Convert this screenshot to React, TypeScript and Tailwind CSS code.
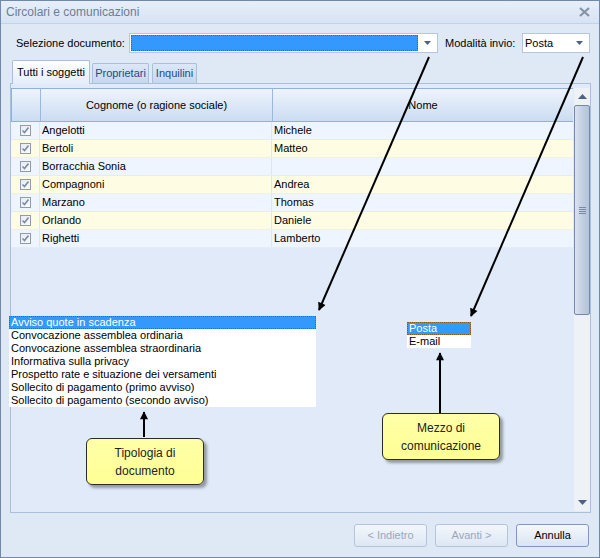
const font = { fontFamily: '"Liberation Sans", Arial, sans-serif' };

type Person = { cognome: string; nome: string };

const people: Person[] = [
  { cognome: 'Angelotti', nome: 'Michele' },
  { cognome: 'Bertoli', nome: 'Matteo' },
  { cognome: 'Borracchia Sonia', nome: '' },
  { cognome: 'Compagnoni', nome: 'Andrea' },
  { cognome: 'Marzano', nome: 'Thomas' },
  { cognome: 'Orlando', nome: 'Daniele' },
  { cognome: 'Righetti', nome: 'Lamberto' }
];

const documenti = [
  'Avviso quote in scadenza',
  'Convocazione assemblea ordinaria',
  'Convocazione assemblea straordinaria',
  'Informativa sulla privacy',
  'Prospetto rate e situazione dei versamenti',
  'Sollecito di pagamento (primo avviso)',
  'Sollecito di pagamento (secondo avviso)'
];

function ComboArrow() {
  return (
    <svg width="7" height="4" viewBox="0 0 7 4" className="shrink-0">
      <path d="M0 0h7L3.5 4z" fill="#4d6185" />
    </svg>
  );
}

function CheckBox() {
  return (
    <div className="flex h-[11px] w-[11px] items-center justify-center border border-[#8e9cb3] bg-gradient-to-br from-[#e6ebf3] to-[#fbfcfe]">
      <svg width="9" height="9" viewBox="0 0 9 9">
        <path d="M1.5 4.5l2 2 4-5" fill="none" stroke="#7d8aa3" strokeWidth="1.6" />
      </svg>
    </div>
  );
}

function WinButton({ label, disabled }: { label: string; disabled?: boolean }) {
  return (
    <button
      className={
        disabled
          ? 'h-[23px] w-[73px] rounded-[3px] border border-[#b3c4dc] bg-gradient-to-b from-[#f3f7fc] to-[#dde7f4] text-[11px] text-[#9ba7b9]'
          : 'h-[23px] w-[73px] rounded-[3px] border border-[#7f98bb] bg-gradient-to-b from-[#f5f8fc] to-[#d9e4f3] text-[11px] text-black'
      }
    >
      {label}
    </button>
  );
}

function Callout({ lines, className }: { lines: string[]; className: string }) {
  return (
    <div
      className={
        'absolute flex h-[47px] w-[118px] flex-col items-center justify-center rounded-[6px] border border-[#2b2b2b] bg-gradient-to-b from-[#ffffa8] to-[#ffff94] text-[12px] leading-[18px] text-[#222] shadow-[3px_3px_3px_rgba(0,0,0,0.35)] ' +
        className
      }
    >
      {lines.map((l) => (
        <span key={l}>{l}</span>
      ))}
    </div>
  );
}

export default function App() {
  return (
    <div className="relative h-[558px] w-[600px] overflow-hidden bg-white" style={font}>
      <div className="flex h-[558px] w-[600px] flex-col border border-[#7088a9] bg-[#dfe9f6]">
        {/* title bar */}
        <div className="flex h-[23px] shrink-0 items-center justify-between border-b border-[#c2d2e7] bg-gradient-to-b from-[#e7eff9] to-[#d6e3f3] pl-[5px] pr-[9px]">
          <span className="text-[12px] text-[#6c7d96]">Circolari e comunicazioni</span>
          <svg width="11" height="10" viewBox="0 0 11 10">
            <path d="M1 1l9 8M10 1L1 9" stroke="#8592a8" strokeWidth="2.2" />
          </svg>
        </div>

        {/* toolbar */}
        <div className="mt-[9px] flex h-[20px] items-center pl-[15px] text-[11px] text-black">
          <span className="w-[113px]">Selezione documento:</span>
          <div className="flex h-[20px] w-[309px] items-center border border-[#b5c7df] bg-white pl-[1px] pr-[6px]">
            <div className="h-[16px] flex-1 border border-dotted border-[#8a5a1a] bg-[#3399ff]" />
            <div className="ml-[6px]">
              <ComboArrow />
            </div>
          </div>
          <span className="ml-[7px] w-[77px]">Modalità invio:</span>
          <div className="flex h-[20px] w-[68px] items-center justify-between border border-[#b5c7df] bg-white pl-[2px] pr-[6px]">
            <span>Posta</span>
            <ComboArrow />
          </div>
        </div>

        {/* tabs */}
        <div className="mt-[7px] flex h-[23px] items-end gap-[2px] pl-[11px] text-[11px]">
          <div className="relative z-10 -mb-px flex h-[24px] w-[78px] items-center justify-center rounded-t-[2px] border border-b-0 border-[#a9bfdc] bg-gradient-to-b from-[#ffffff] to-[#e4edf9] text-black">
            Tutti i soggetti
          </div>
          <div className="flex h-[20px] w-[57px] items-center justify-center rounded-t-[2px] border border-b-0 border-[#a9bfdc] bg-gradient-to-b from-[#dce8f7] to-[#c5d7ef] text-[#1d4a8c]">
            Proprietari
          </div>
          <div className="ml-px flex h-[20px] w-[45px] items-center justify-center rounded-t-[2px] border border-b-0 border-[#a9bfdc] bg-gradient-to-b from-[#dce8f7] to-[#c5d7ef] text-[#1d4a8c]">
            Inquilini
          </div>
        </div>

        {/* tab panel */}
        <div className="ml-[9px] h-[430px] w-[581px] border border-[#a9bfdc] bg-[#e0eaf8] pt-[4px]">
          <div className="flex h-[423px]">
            <div className="flex w-[562px] flex-col text-[11px] text-black">
              <div className="flex h-[34px] border-y border-l border-[#8fb1de] bg-gradient-to-b from-[#eef4fc] to-[#cbdcf2]">
                <div className="w-[29px] border-r border-[#9ab9e2]" />
                <div className="flex w-[232px] items-center justify-center border-r border-[#9ab9e2]">
                  Cognome (o ragione sociale)
                </div>
                <div className="flex flex-1 items-center justify-center">Nome</div>
              </div>
              {people.map((p, i) => (
                <div
                  key={p.cognome}
                  className={
                    i % 2 === 1
                      ? 'flex h-[18px] border-b border-[#eef2e0] bg-[#fefde4]'
                      : 'flex h-[18px] border-b border-[#e3ecf8] bg-[#eef5fe]'
                  }
                >
                  <div className="flex w-[29px] items-center justify-center border-r border-[#dde7f4] pl-[1px]">
                    <CheckBox />
                  </div>
                  <div className="flex w-[232px] items-center border-r border-[#dde7f4] pl-[2px]">{p.cognome}</div>
                  <div className="flex flex-1 items-center pl-[2px]">{p.nome}</div>
                </div>
              ))}
            </div>

            {/* scrollbar */}
            <div className="ml-[1px] flex w-[16px] flex-col bg-[#eef1f6]">
              <div className="flex h-[17px] items-center justify-center">
                <svg width="9" height="5" viewBox="0 0 9 5">
                  <path d="M0 5h9L4.5 0z" fill="#4d6185" />
                </svg>
              </div>
              <div className="flex h-[210px] items-center justify-center rounded-[2px] border border-[#7489a9] bg-gradient-to-r from-[#dbe3ee] via-[#c3d0e2] to-[#b2c2d9]">
                <div className="flex flex-col gap-[1px]">
                  <div className="h-px w-[7px] bg-[#7a8aa3]" />
                  <div className="h-px w-[7px] bg-[#7a8aa3]" />
                  <div className="h-px w-[7px] bg-[#7a8aa3]" />
                  <div className="h-px w-[7px] bg-[#7a8aa3]" />
                </div>
              </div>
              <div className="flex-1" />
              <div className="flex h-[17px] items-center justify-center">
                <svg width="9" height="5" viewBox="0 0 9 5">
                  <path d="M0 0h9L4.5 5z" fill="#4d6185" />
                </svg>
              </div>
            </div>
          </div>
        </div>

        {/* footer */}
        <div className="mt-[11px] flex justify-end gap-[8px] pr-[10px]">
          <WinButton label="< Indietro" disabled />
          <WinButton label="Avanti >" disabled />
          <WinButton label="Annulla" />
        </div>
      </div>

      {/* opened document list */}
      <div className="absolute left-[9px] top-[316px] w-[307px] bg-white text-[11px] leading-[13px] text-black">
        {documenti.map((d, i) => (
          <div
            key={d}
            className={
              i === 0
                ? 'h-[13px] border border-dotted border-[#8a5a1a] bg-[#3399ff] pl-[1px] leading-[11px] text-white'
                : 'h-[13px] pl-[2px]'
            }
          >
            {d}
          </div>
        ))}
      </div>

      {/* opened mode list */}
      <div className="absolute left-[407px] top-[322px] w-[64px] bg-white text-[11px] leading-[13px] text-black">
        <div className="h-[13px] border border-dotted border-[#8a5a1a] bg-[#3399ff] pl-[1px] leading-[11px] text-white">
          Posta
        </div>
        <div className="h-[13px] pl-[2px]">E-mail</div>
      </div>

      <Callout lines={['Tipologia di', 'documento']} className="left-[86px] top-[438px]" />
      <Callout lines={['Mezzo di', 'comunicazione']} className="left-[382px] top-[413px]" />

      {/* annotation arrows */}
      <svg className="pointer-events-none absolute left-0 top-0" width="600" height="558" viewBox="0 0 600 558">
        <defs>
          <marker id="head" viewBox="0 0 10 10" refX="9" refY="5" markerWidth="5" markerHeight="4" orient="auto">
            <path d="M0 0L10 5L0 10z" fill="#000" />
          </marker>
        </defs>
        <g stroke="#000" strokeWidth="2" fill="none" markerEnd="url(#head)">
          <line x1="429" y1="57" x2="319" y2="310" />
          <line x1="583" y1="57" x2="471" y2="316" />
          <line x1="144" y1="437" x2="144" y2="412" />
          <line x1="440" y1="413" x2="440" y2="353" />
        </g>
      </svg>
    </div>
  );
}
